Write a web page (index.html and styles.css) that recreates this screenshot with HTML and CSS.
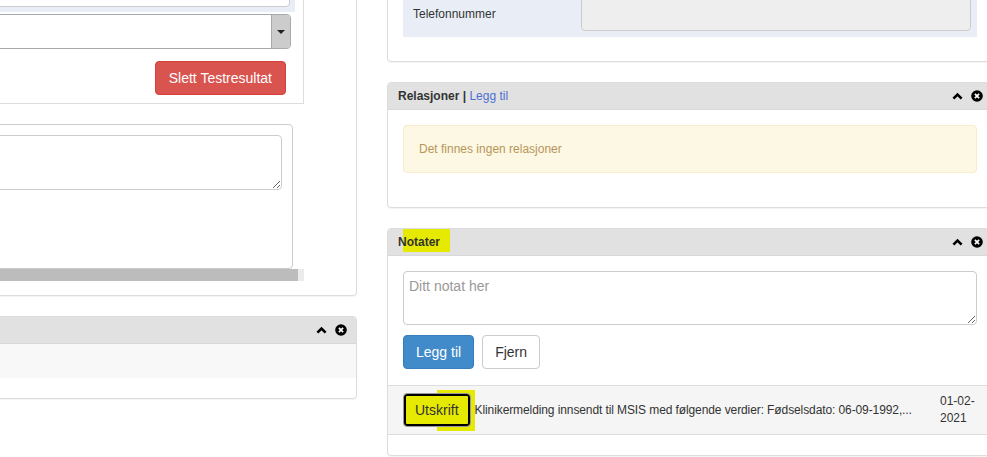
FILE: index.html
```html
<!DOCTYPE html>
<html lang="no">
<head>
<meta charset="utf-8">
<title>Pasient</title>
<link rel="stylesheet" href="styles.css">
</head>
<body>
<div class="page">
  <div class="col col-left">
    <div class="panel panel-a">
      <div class="panel-body body-a">
        <div class="box-b">
          <div class="band band-left"><div class="input input-left"></div></div>
          <div class="select"><span class="select-arrow"><span class="caret"></span></span></div>
          <div class="btn-row"><button class="btn btn-danger">Slett Testresultat</button></div>
        </div>
        <div class="scroll-area">
          <div class="box-c"><textarea class="textarea textarea-c"></textarea></div>
          <div class="scrollbar"><div class="thumb"></div></div>
        </div>
      </div>
    </div>
    <div class="panel">
      <div class="panel-heading">
        <span class="title"></span>
        <span class="tools">
          <svg class="ico-up" width="11" height="8" viewBox="0 0 11 8"><path d="M1.4 6.6 L5.5 2.5 L9.6 6.6" fill="none" stroke="#000" stroke-width="2.6"/></svg>
          <svg class="ico-x" width="12" height="12" viewBox="0 0 12 12"><circle cx="6" cy="6" r="5.8" fill="#000"/><path d="M3.9 3.9 L8.1 8.1 M8.1 3.9 L3.9 8.1" stroke="#fff" stroke-width="1.7"/></svg>
        </span>
      </div>
      <div class="table-body"><div class="striped-row"></div></div>
    </div>
  </div>

  <div class="col col-right">
    <div class="panel panel-top">
      <div class="panel-body body-top">
        <div class="band band-right">
          <span class="field-label">Telefonnummer</span>
          <div class="input input-ro"></div>
        </div>
      </div>
    </div>

    <div class="panel">
      <div class="panel-heading">
        <span class="title">Relasjoner | <a class="link">Legg til</a></span>
        <span class="tools">
          <svg class="ico-up" width="11" height="8" viewBox="0 0 11 8"><path d="M1.4 6.6 L5.5 2.5 L9.6 6.6" fill="none" stroke="#000" stroke-width="2.6"/></svg>
          <svg class="ico-x" width="12" height="12" viewBox="0 0 12 12"><circle cx="6" cy="6" r="5.8" fill="#000"/><path d="M3.9 3.9 L8.1 8.1 M8.1 3.9 L3.9 8.1" stroke="#fff" stroke-width="1.7"/></svg>
        </span>
      </div>
      <div class="panel-body">
        <div class="alert">Det finnes ingen relasjoner</div>
      </div>
    </div>

    <div class="panel panel-notes">
      <div class="panel-heading">
        <span class="title"><span class="mark">Notater</span></span>
        <span class="tools">
          <svg class="ico-up" width="11" height="8" viewBox="0 0 11 8"><path d="M1.4 6.6 L5.5 2.5 L9.6 6.6" fill="none" stroke="#000" stroke-width="2.6"/></svg>
          <svg class="ico-x" width="12" height="12" viewBox="0 0 12 12"><circle cx="6" cy="6" r="5.8" fill="#000"/><path d="M3.9 3.9 L8.1 8.1 M8.1 3.9 L3.9 8.1" stroke="#fff" stroke-width="1.7"/></svg>
        </span>
      </div>
      <div class="panel-body body-notes">
        <textarea class="textarea textarea-note" placeholder="Ditt notat her"></textarea>
        <div class="btn-group">
          <button class="btn btn-primary">Legg til</button>
          <button class="btn btn-default">Fjern</button>
        </div>
      </div>
      <div class="note-row">
        <div class="note-main">
          <span class="hl"><button class="btn btn-print">Utskrift</button></span>
          <span class="note-text">Klinikermelding innsendt til MSIS med følgende verdier: Fødselsdato: 06-09-1992,...</span>
        </div>
        <div class="note-date">01-02-2021</div>
      </div>
    </div>
  </div>
</div>
</body>
</html>
```

FILE: styles.css
```css
html, body {
  margin: 0;
  padding: 0;
  overflow: hidden;
  background: #fff;
}

body {
  font-family: "Liberation Sans", Arial, sans-serif;
  font-size: 12px;
  color: #333;
}

.page {
  display: flex;
  align-items: flex-start;
  gap: 30px;
  margin-left: -300px;
}

.col { flex: none; }
.col-left { width: 657px; }
.col-right { width: 606px; }

.panel {
  border: 1px solid #ddd;
  border-radius: 4px;
  background: #fff;
  margin-bottom: 20px;
  box-shadow: 0 1px 1px rgba(0, 0, 0, 0.05);
}

.panel-heading {
  display: flex;
  align-items: center;
  justify-content: space-between;
  height: 14px;
  line-height: 14px;
  padding: 6px 10px;
  background: #e1e1e1;
  border-bottom: 1px solid #d9d9d9;
  border-radius: 3px 3px 0 0;
  font-weight: bold;
  font-size: 12px;
  color: #333;
}

.link {
  font-weight: normal;
  color: #4e6fd4;
}

.tools {
  display: flex;
  align-items: center;
  gap: 8px;
  margin-right: -1px;
}

.ico-up, .ico-x { display: block; }

.panel-body { padding: 15px; }

/* ---------- left column ---------- */
.panel-a { margin-top: -30px; }
.body-a { padding: 15px 52px 14px 15px; }

.box-b {
  border: 1px solid #ddd;
  padding: 0 8px 8px 0;
  display: flex;
  flex-direction: column;
}

.band { background: #e9eef6; }
.band-left { padding: 0 5px 5px 0; }

.input {
  box-sizing: border-box;
  border: 1px solid #ccc;
  border-radius: 4px;
  background: #fff;
}
.input-left { height: 20px; }

.select {
  box-sizing: border-box;
  height: 35px;
  margin: 2px 4px 0 0;
  border: 1px solid #aaa;
  border-radius: 4px;
  background: #fff;
  display: flex;
  justify-content: flex-end;
  overflow: hidden;
}
.select-arrow {
  width: 18px;
  background: #ccc;
  border-left: 1px solid #aaa;
  display: flex;
  align-items: center;
  justify-content: center;
}
.caret {
  width: 0;
  height: 0;
  border-left: 4px solid transparent;
  border-right: 4px solid transparent;
  border-top: 4px solid #222;
}

.btn-row {
  display: flex;
  justify-content: flex-end;
  margin: 12px 9px 0 0;
}

.btn {
  font-family: "Liberation Sans", Arial, sans-serif;
  font-size: 14px;
  line-height: 20px;
  padding: 6px 12px;
  border: 1px solid #ccc;
  border-radius: 4px;
  background: #fff;
  color: #333;
  margin: 0;
}
.btn-danger {
  background: #d9534f;
  border-color: #d43f3a;
  color: #fff;
  padding: 6px 13px;
}
.btn-primary {
  background: #428bca;
  border-color: #357ebd;
  color: #fff;
}

.scroll-area { margin-top: 20px; }

.box-c {
  height: 133px;
  padding: 10px 10px 0 0;
  margin-right: 11px;
  border: 1px solid #ccc;
  border-radius: 4px;
}

.textarea {
  display: block;
  box-sizing: border-box;
  width: 100%;
  margin: 0;
  border: 1px solid #ccc;
  border-radius: 4px;
  background: #fff;
  font-family: "Liberation Sans", Arial, sans-serif;
  font-size: 14px;
  line-height: 20px;
}
.textarea-c { height: 55px; }

.scrollbar {
  height: 12px;
  background: #ebebeb;
}
.thumb {
  height: 100%;
  margin-right: 6px;
  background: #bcbcbc;
}

.striped-row {
  height: 34px;
  background: #f8f8f8;
  margin-bottom: 20px;
}

/* ---------- right column ---------- */
.panel-top { margin-top: -25px; }
.body-top { padding: 15px 15px 24px; }

.band-right {
  display: flex;
  align-items: center;
  padding: 6px 6px 6px 10px;
}
.field-label {
  flex: none;
  width: 168px;
  font-size: 12px;
}
.input-ro {
  flex: 1;
  height: 34px;
  background: #eee;
}

.alert {
  padding: 16px 15px 15px;
  line-height: 15px;
  margin-bottom: 19px;
  background: #fcf8e3;
  border: 1px solid #faebcc;
  border-radius: 4px;
  color: #b9955a;
}

.mark {
  position: relative;
  z-index: 0;
}
.mark::before {
  content: "";
  position: absolute;
  left: 5px;
  right: -10px;
  top: -6px;
  bottom: -3px;
  background: #e6e900;
  z-index: -1;
}

.body-notes { padding: 15px 15px 16px; }

.textarea-note {
  height: 54px;
  padding: 4px 5px;
  color: #333;
}
.textarea-note::placeholder { color: #999; }

.btn-group {
  display: flex;
  gap: 8px;
  margin-top: 10px;
}

.note-row {
  display: flex;
  align-items: center;
  padding: 7px 12px 7px 15px;
  background: #f5f5f5;
  border-top: 1px solid #ddd;
  border-bottom: 1px solid #ddd;
  margin-bottom: 20px;
}
.note-main {
  flex: 1;
  min-width: 0;
  display: flex;
  align-items: center;
}
.hl {
  position: relative;
  display: inline-flex;
  flex: none;
  z-index: 0;
}
.hl::before {
  content: "";
  position: absolute;
  left: 34px;
  right: -4px;
  top: -3px;
  bottom: -4px;
  background: #e6e900;
  z-index: -1;
}
.btn-print {
  background: #e6e900;
  border-color: #999;
  box-shadow: inset 0 0 0 2px #000;
  color: #333;
  padding: 6px 11px;
}
.note-text {
  margin-left: 4px;
  white-space: nowrap;
  overflow: hidden;
  font-size: 12px;
  letter-spacing: -0.1px;
}
.note-date {
  flex: none;
  width: 40px;
  margin-left: 19px;
  line-height: 17px;
  font-size: 12px;
}
```
